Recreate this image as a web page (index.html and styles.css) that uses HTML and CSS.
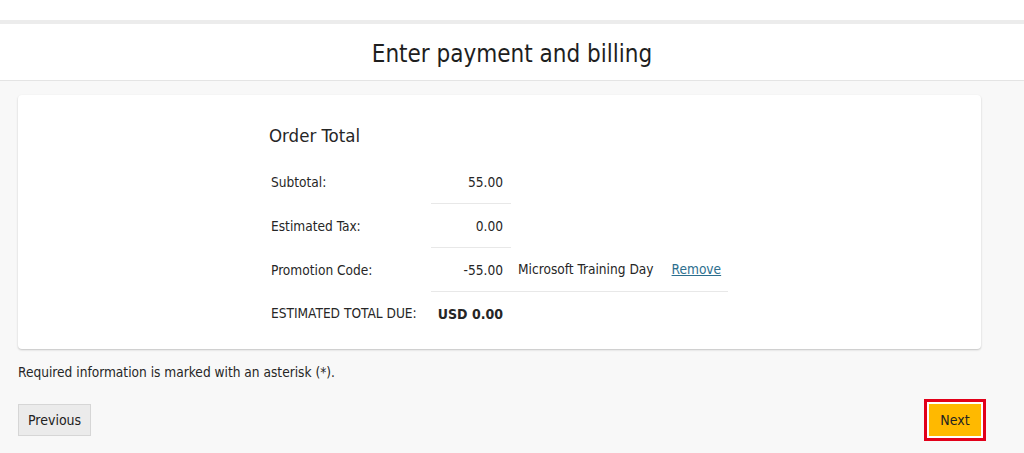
FILE: index.html
```html
<!DOCTYPE html>
<html>
<head>
    <title>Enter payment and billing</title>
    <link rel="stylesheet" href="styles.css">
</head>
<body>

<div class="top-strip"></div>

<div class="page-header">
    <h1>Enter payment and billing</h1>
</div>

<div class="content">
    <div class="card">
        <div class="order">
            <h2>Order Total</h2>
            <table class="totals">
                <tr>
                    <td class="label">Subtotal:</td>
                    <td class="amount">55.00</td>
                    <td></td>
                    <td></td>
                </tr>
                <tr>
                    <td class="label">Estimated Tax:</td>
                    <td class="amount">0.00</td>
                    <td></td>
                    <td></td>
                </tr>
                <tr>
                    <td class="label">Promotion Code:</td>
                    <td class="amount">-55.00</td>
                    <td class="promo">Microsoft Training Day</td>
                    <td class="promo"><a href="#">Remove</a></td>
                </tr>
                <tr class="total-row">
                    <td class="label">ESTIMATED TOTAL DUE:</td>
                    <td class="amount"><b>USD 0.00</b></td>
                    <td></td>
                    <td></td>
                </tr>
            </table>
        </div>
    </div>

    <p class="note">Required information is marked with an asterisk (*).</p>

    <div class="actions">
        <button class="btn-secondary">Previous</button>
        <span class="highlight">
            <button class="btn-primary">Next</button>
        </span>
    </div>
</div>

</body>
</html>
```

FILE: styles.css
```css
:root {
    --page-bg: #f8f8f8;
    --text-color: #262626;
    --line-color: #e8e8e8;
    --link-color: #2c6e8e;
    --primary-bg: #ffb900;
}

body {
    margin: 0;
    font-family: Tahoma, "DejaVu Sans Condensed", "Liberation Sans", sans-serif;
    font-size: 13.6px;
    background-color: var(--page-bg);
    color: var(--text-color);
}

.top-strip {
    height: 20px;
    background-color: #ffffff;
    border-bottom: 4px solid #ececec;
}

.page-header {
    height: 57px;
    background-color: #ffffff;
    border-bottom: 1px solid #e4e4e4;
    display: flex;
    align-items: center;
    justify-content: center;
    box-sizing: border-box;
    padding-top: 4px;
}

.page-header h1 {
    margin: 0;
    font-size: 24px;
    font-weight: normal;
    color: #1e1e1e;
}

.content {
    padding: 14px 18px 0 18px;
    margin-right: 25px;
}

.card {
    background-color: #ffffff;
    border-radius: 4px;
    box-shadow: 0 1px 2px rgba(0, 0, 0, 0.22);
    padding: 30px 0 14px 0;
}

.order {
    margin-left: 250px;
}

.order h2 {
    margin: 0 0 14px 1px;
    font-size: 18.5px;
    font-weight: normal;
}

.totals {
    border-collapse: collapse;
}

.totals td {
    height: 43px;
    padding: 0;
    vertical-align: middle;
    white-space: nowrap;
}

.totals .label {
    width: 160px;
    padding-left: 3px;
}

.totals .amount {
    width: 72px;
    padding-right: 8px;
    text-align: right;
    border-bottom: 1px solid var(--line-color);
}

.totals .promo {
    padding: 0 7px;
    border-bottom: 1px solid var(--line-color);
}

.totals .promo a {
    color: var(--link-color);
    padding-left: 4px;
}

.totals .total-row .amount {
    border-bottom: none;
    font-size: 14px;
}

.note {
    margin: 15px 0 0 0;
}

.actions {
    display: flex;
    justify-content: space-between;
    align-items: center;
    margin-top: 19px;
}

button {
    font-family: inherit;
    font-size: 14px;
    height: 32px;
    padding: 0 9px;
    cursor: pointer;
    color: #222222;
}

.btn-secondary {
    background-color: #ebebeb;
    border: 1px solid #d6d6d6;
}

.highlight {
    border: 3px solid #e2001a;
    padding: 2px;
    background-color: #ffffff;
    display: flex;
    margin-right: -5px;
}

.btn-primary {
    background-color: var(--primary-bg);
    border: none;
    width: 52px;
    padding: 0;
}
```
